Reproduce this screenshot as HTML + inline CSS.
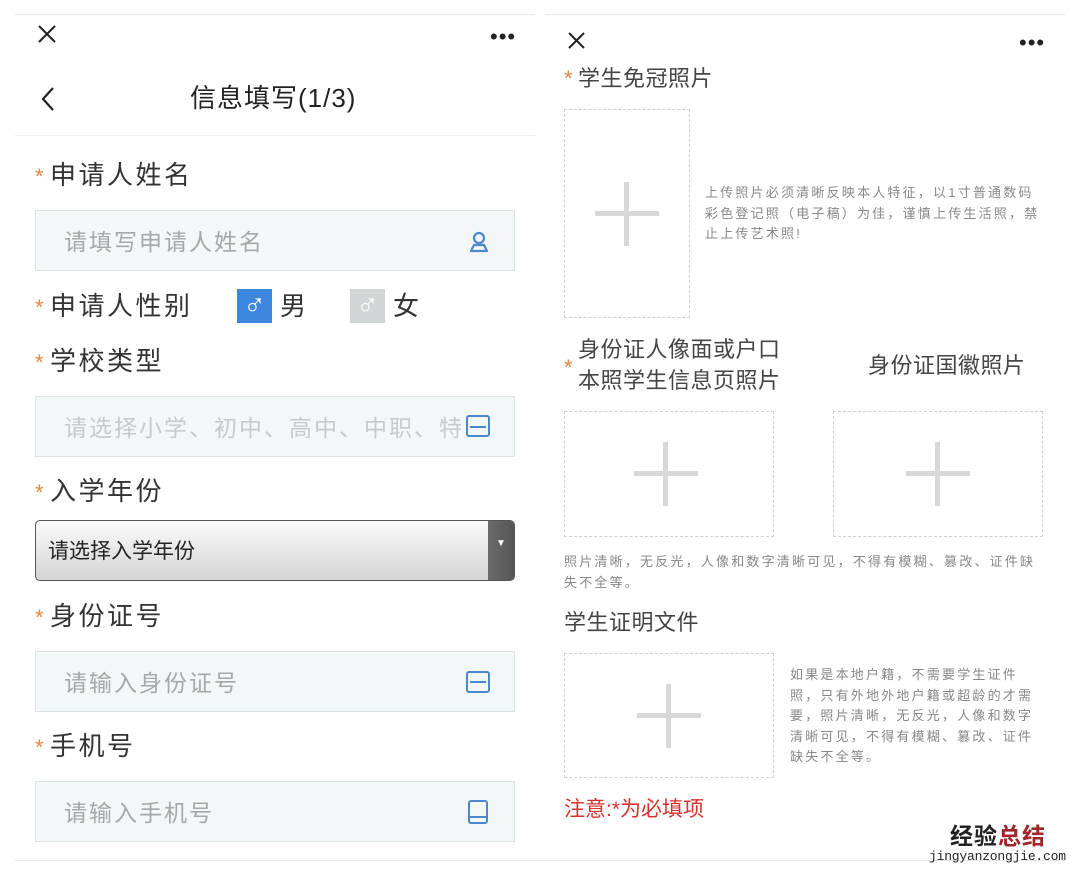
<!DOCTYPE html>
<html><head><meta charset="utf-8"><style>
*{margin:0;padding:0;box-sizing:border-box}
body{width:1080px;height:875px;background:#fff;position:relative;overflow:hidden;font-family:"Liberation Sans","Noto Sans CJK SC",sans-serif;color:#333}
.a{position:absolute;white-space:nowrap;line-height:1}
.lbl{font-size:26px;color:#333;letter-spacing:2.5px}
.st{color:#e8873c;font-size:22px;display:inline-block;width:15px;letter-spacing:0}
.inp{position:absolute;left:35px;width:480px;height:61px;background:#f4f7f8;border:1px solid #dde3e5}
.ph{position:absolute;left:28px;top:18px;font-size:23px;color:#a4a8aa;letter-spacing:2px;line-height:1}
.box{position:absolute;border:1px dashed #d0d0d0}
.plus{position:absolute;width:64px;height:64px;left:50%;top:50%;margin:-32px 0 0 -32px}
.plus:before{content:"";position:absolute;left:0;top:29px;width:64px;height:5px;background:#d8d8d8}
.plus:after{content:"";position:absolute;left:29px;top:0;width:5px;height:64px;background:#d8d8d8}
.hint{position:absolute;font-size:13px;color:#888;line-height:20.5px;letter-spacing:2.2px}
.r{font-size:22px;color:#444;letter-spacing:0.5px}
</style></head><body>
<div class="a" style="left:15px;top:14px;width:520px;border-top:1px solid #e6e6e6"></div>
<div class="a" style="left:545px;top:14px;width:520px;border-top:1px solid #e6e6e6"></div>
<div class="a" style="left:15px;top:860px;width:1050px;border-top:1px solid #e6e6e6"></div>

<!-- Left panel -->
<svg class="a" style="left:37px;top:24px" width="20" height="20"><path d="M2 2L18 18M18 2L2 18" stroke="#222" stroke-width="2"/></svg>
<div class="a" style="left:490px;top:26px;font-size:22px;letter-spacing:1px;color:#222">•••</div>
<svg class="a" style="left:40px;top:86px" width="16" height="26"><path d="M13 2L3 13L13 24" stroke="#222" stroke-width="2.2" fill="none"/></svg>
<div class="a" style="left:190px;top:85px;font-size:26px;color:#222;letter-spacing:1px">信息填写(1/3)</div>
<div class="a" style="left:15px;top:135px;width:520px;border-top:1px solid #eee"></div>

<div class="a lbl" style="left:35px;top:162px"><span class="st">*</span>申请人姓名</div>
<div class="inp" style="top:210px"><span class="ph" style="top:20px">请填写申请人姓名</span>
<svg class="a" style="left:430px;top:18px" width="26" height="26" viewBox="0 0 26 26"><circle cx="13" cy="9" r="5" stroke="#4a88d0" stroke-width="2.2" fill="none"/><path d="M5 22L8 16H18L21 22Z" stroke="#4a88d0" stroke-width="2.2" fill="none" stroke-linejoin="round"/></svg></div>

<div class="a lbl" style="left:35px;top:293px"><span class="st">*</span>申请人性别</div>
<div class="a" style="left:237px;top:289px;width:35px;height:34px;background:#3d87e0;color:#fff;font-size:30px;text-align:center;line-height:34px">♂</div>
<div class="a lbl" style="left:280px;top:293px">男</div>
<div class="a" style="left:350px;top:289px;width:35px;height:34px;background:#d2d5d5;color:#fff;font-size:30px;text-align:center;line-height:34px">♂</div>
<div class="a lbl" style="left:393px;top:293px">女</div>

<div class="a lbl" style="left:35px;top:348px"><span class="st">*</span>学校类型</div>
<div class="inp" style="top:396px"><span class="ph" style="color:#c6cacc;top:20px">请选择小学、初中、高中、中职、特</span>
<div class="a" style="left:430px;top:18px;width:24px;height:22px;border:2px solid #4a88d0;border-radius:3px;background:#f4f7f8"><div class="a" style="left:2px;top:9px;width:16px;border-top:2px solid #4a88d0"></div></div></div>

<div class="a lbl" style="left:35px;top:478px"><span class="st">*</span>入学年份</div>
<div class="a" style="left:35px;top:520px;width:480px;height:61px;border:1px solid #555;border-radius:5px;background:linear-gradient(#fafafa,#d4d4d4);overflow:hidden">
<div class="a" style="left:12px;top:20px;font-size:21px;color:#222">请选择入学年份</div>
<div class="a" style="right:0;top:0;width:26px;height:61px;background:linear-gradient(90deg,#6c6c6c,#555);color:#fff;font-size:10px;text-align:center;line-height:46px">▼</div></div>

<div class="a lbl" style="left:35px;top:603px"><span class="st">*</span>身份证号</div>
<div class="inp" style="top:651px"><span class="ph" style="top:20px">请输入身份证号</span>
<div class="a" style="left:430px;top:19px;width:24px;height:22px;border:2px solid #4a88d0;border-radius:3px"><div class="a" style="left:2px;top:8px;width:16px;border-top:2px solid #4a88d0"></div></div></div>

<div class="a lbl" style="left:35px;top:733px"><span class="st">*</span>手机号</div>
<div class="inp" style="top:781px"><span class="ph" style="top:20px">请输入手机号</span>
<div class="a" style="left:432px;top:18px;width:20px;height:24px;border:2px solid #4a88d0;border-radius:3px"><div class="a" style="left:0;top:14px;width:16px;border-top:2px solid #4a88d0"></div></div></div>

<!-- Right panel -->
<svg class="a" style="left:567px;top:31px" width="19" height="19"><path d="M2 2L17 17M17 2L2 17" stroke="#222" stroke-width="2"/></svg>
<div class="a" style="left:1019px;top:32px;font-size:22px;letter-spacing:1px;color:#222">•••</div>

<div class="a r" style="left:564px;top:68px"><span class="st" style="width:14px">*</span>学生免冠照片</div>
<div class="box" style="left:564px;top:109px;width:126px;height:209px"><div class="plus"></div></div>
<div class="hint" style="left:705px;top:183px;width:335px">上传照片必须清晰反映本人特征，以1寸普通数码彩色登记照（电子稿）为佳，谨慎上传生活照，禁止上传艺术照!</div>

<div class="a r" style="left:578px;top:339px">身份证人像面或户口</div>
<div class="a r" style="left:578px;top:370px">本照学生信息页照片</div>
<div class="a st" style="left:564px;top:357px">*</div>
<div class="a r" style="left:868px;top:355px">身份证国徽照片</div>
<div class="box" style="left:564px;top:411px;width:210px;height:126px"><div class="plus" style="width:70px;margin-left:-35px"></div></div>
<div class="box" style="left:833px;top:411px;width:210px;height:126px"><div class="plus"></div></div>
<div class="hint" style="left:564px;top:552px;width:474px">照片清晰，无反光，人像和数字清晰可见，不得有模糊、篡改、证件缺失不全等。</div>

<div class="a r" style="left:564px;top:612px">学生证明文件</div>
<div class="box" style="left:564px;top:653px;width:210px;height:125px"><div class="plus"></div></div>
<div class="hint" style="left:790px;top:665px;width:248px">如果是本地户籍，不需要学生证件照，只有外地外地户籍或超龄的才需要，照片清晰，无反光，人像和数字清晰可见，不得有模糊、篡改、证件缺失不全等。</div>

<div class="a" style="left:564px;top:799px;font-size:21px;color:#d9322b">注意:*为必填项</div>

<div class="a" style="left:950px;top:825px;font-size:23px;font-weight:bold;color:#222;letter-spacing:1px">经验<span style="color:#a0262a">总结</span></div>
<div class="a" style="left:929px;top:850px;font-size:13px;font-family:'Liberation Mono',monospace;color:#222;letter-spacing:-0.2px">jingyanzongjie.com</div>
</body></html>
